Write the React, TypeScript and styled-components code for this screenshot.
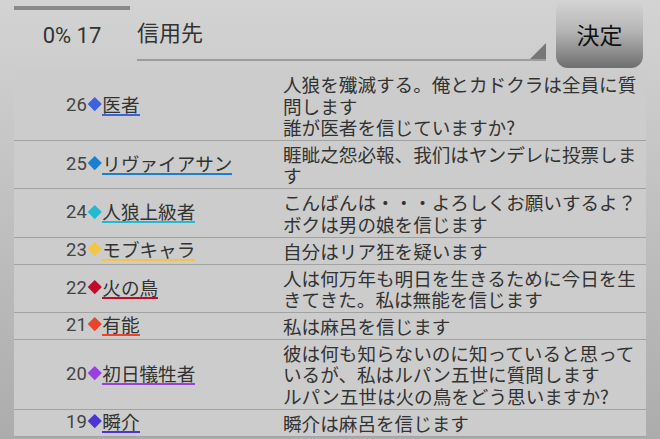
import styled, { createGlobalStyle } from "styled-components";

const GlobalStyle = createGlobalStyle`
  html, body {
    margin: 0;
    height: 100%;
  }
  body {
    background: linear-gradient(#d3d3d3, #acacac);
    font-family: Roboto, "Noto Sans CJK JP", sans-serif;
    overflow: hidden;
  }
`;

type Player = {
  no: number;
  color: string;
  name: string;
  text: string;
};

const players: Player[] = [
  {
    no: 26,
    color: "#3b63dd",
    name: "医者",
    text: "人狼を殲滅する。俺とカドクラは全員に質問します\n誰が医者を信じていますか?",
  },
  {
    no: 25,
    color: "#1a7fd0",
    name: "リヴァイアサン",
    text: "睚眦之怨必報、我们はヤンデレに投票します",
  },
  {
    no: 24,
    color: "#22bad0",
    name: "人狼上級者",
    text: "こんばんは・・・よろしくお願いするよ？\nボクは男の娘を信じます",
  },
  { no: 23, color: "#f4c542", name: "モブキャラ", text: "自分はリア狂を疑います" },
  {
    no: 22,
    color: "#c20a2a",
    name: "火の鳥",
    text: "人は何万年も明日を生きるために今日を生きてきた。私は無能を信じます",
  },
  { no: 21, color: "#e8452c", name: "有能", text: "私は麻呂を信じます" },
  {
    no: 20,
    color: "#9a3fe0",
    name: "初日犠牲者",
    text: "彼は何も知らないのに知っていると思っているが、私はルパン五世に質問します\nルパン五世は火の鳥をどう思いますか?",
  },
  { no: 19, color: "#4b36d2", name: "瞬介", text: "瞬介は麻呂を信じます" },
];

export default function App() {
  return (
    <>
      <GlobalStyle />
      <Page>
        <TopBar>
          <Counter>
            <Progress />
            <CountText>0% 17</CountText>
          </Counter>
          <TargetField>
            <TargetLabel>信用先</TargetLabel>
            <Corner />
          </TargetField>
          <DecideButton>決定</DecideButton>
        </TopBar>
        <Table>
          {players.map((p) => (
            <Row key={p.no}>
              <NameCell>
                <Num>{p.no}</Num>
                <Diamond $color={p.color} />
                <Name $color={p.color}>{p.name}</Name>
              </NameCell>
              <Message>{p.text}</Message>
            </Row>
          ))}
        </Table>
      </Page>
    </>
  );
}

const Page = styled.div`
  display: flex;
  flex-direction: column;
  padding: 0 14px;
  height: 100vh;
`;

const TopBar = styled.div`
  display: flex;
  align-items: flex-start;
  height: 71px;
`;

const Counter = styled.div`
  display: flex;
  flex-direction: column;
  width: 123px;
`;

const Progress = styled.div`
  width: 116px;
  height: 4px;
  margin-top: 6px;
  background: #8a8a8a;
`;

const CountText = styled.div`
  width: 116px;
  margin-top: 13px;
  text-align: center;
  font-size: 22px;
  line-height: 26px;
  color: #333;
`;

const TargetField = styled.div`
  position: relative;
  flex: 1;
  height: 59px;
  margin-right: 10px;
  border-bottom: 2px solid #9c9c9c;
`;

const TargetLabel = styled.div`
  margin-top: 17px;
  font-family: "Noto Sans CJK JP", sans-serif;
  font-size: 22px;
  line-height: 28px;
  color: #333;
`;

const Corner = styled.div`
  position: absolute;
  right: 0;
  bottom: 0;
  width: 0;
  height: 0;
  border-left: 16px solid transparent;
  border-bottom: 16px solid #777;
`;

const DecideButton = styled.button`
  width: 87px;
  height: 68px;
  margin-right: 3px;
  border: none;
  border-radius: 12px;
  background: linear-gradient(#d4d4d4 0%, #b6b6b6 45%, #6e6e6e 100%);
  font-family: "Noto Sans CJK JP", sans-serif;
  font-size: 23px;
  color: #111;
  padding: 0;
`;

const Table = styled.div`
  display: flex;
  flex-direction: column;
  background: #cccccc;
`;

const Row = styled.div`
  display: grid;
  grid-template-columns: 269px 1fr;
  align-items: center;
  padding: 2px 0 2.4px;
  border-bottom: 1px solid #a2a2a2;
`;

const NameCell = styled.div`
  display: flex;
  align-items: center;
  padding-left: 52px;
  height: 21px;
`;

const Num = styled.span`
  font-size: 18.5px;
  line-height: 17px;
  padding: 2px 0 2px;
  color: #444;
`;

const Diamond = styled.span<{ $color: string }>`
  width: 9.5px;
  height: 9.5px;
  margin: 0 3px 3px 3px;
  background: ${(p) => p.$color};
  transform: rotate(45deg);
`;

const Name = styled.span<{ $color: string }>`
  font-family: "Noto Sans CJK JP", sans-serif;
  font-size: 18.6px;
  line-height: 17px;
  padding-bottom: 2px;
  color: #333;
  border-bottom: 2px solid ${(p) => p.$color};
`;

const Message = styled.div`
  font-family: "Noto Sans CJK JP", sans-serif;
  font-size: 18.6px;
  line-height: 21.5px;
  color: #333;
  white-space: pre-wrap;
`;
